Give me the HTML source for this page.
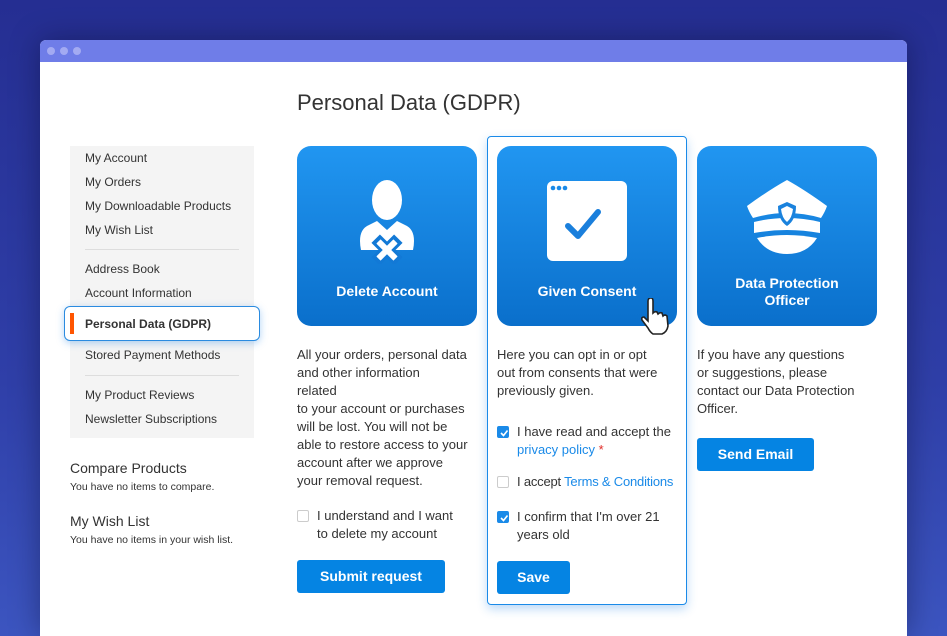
<!DOCTYPE html>
<html style="width:947px;height:636px;overflow:hidden"><head><meta charset="utf-8"><style>
*{margin:0;padding:0;box-sizing:border-box}
body{width:947px;height:636px;overflow:hidden;background:linear-gradient(180deg,#252e92 0%,#2f3fa8 60%,#3c55c0 100%);font-family:"Liberation Sans",sans-serif;color:#333;position:relative}
.win{position:absolute;left:40px;top:40px;width:867px;height:596px;background:#fff;border-radius:6px 6px 0 0;overflow:hidden;box-shadow:0 0 30px rgba(0,0,20,.35)}
.bar{height:22px;background:#6f7de8;position:relative}
.dot{position:absolute;top:7px;width:8px;height:8px;border-radius:50%;background:#a3aaf2}
.a{position:absolute;white-space:nowrap}
h1{position:absolute;left:257px;top:50px;font-size:22px;font-weight:normal;color:#333}
.side{position:absolute;left:30px;top:106px;width:184px;height:292px;background:#f4f4f4}
.si{position:absolute;left:45px;font-size:12px;color:#333}
.sep{position:absolute;left:45px;width:154px;height:1px;background:#ddd}
.hl{position:absolute;left:24px;top:266px;width:196px;height:35px;background:#fff;border:1px solid #2a8be0;border-radius:6px;box-shadow:0 2px 8px rgba(30,130,230,.35)}
.card{position:absolute;top:106px;width:180px;height:180px;border-radius:14px;background:linear-gradient(180deg,#2196f1,#0a6fcb)}
.card .l{position:absolute;left:0;right:0;text-align:center;color:#fff;font-weight:bold;font-size:14px;line-height:17px}
.p{position:absolute;font-size:13px;line-height:18px;color:#333}
.btn{position:absolute;background:#0584e3;color:#fff;font-weight:bold;font-size:14px;border-radius:3px;text-align:center}
.cb{position:absolute;width:12px;height:12px;border:1px solid #ccc;border-radius:2px;background:#fff}
.cb.on{background:#1a8ae8;border-color:#1a8ae8}
.lk{color:#1a8ae8}
</style></head><body>
<div class="win">
<div class="bar"><div class="dot" style="left:7px"></div><div class="dot" style="left:20px"></div><div class="dot" style="left:33px"></div></div>
<h1>Personal Data (GDPR)</h1>
<div class="side"></div>
<div class="si a" style="top:111px">My Account</div>
<div class="si a" style="top:135px">My Orders</div>
<div class="si a" style="top:159px">My Downloadable Products</div>
<div class="si a" style="top:183px">My Wish List</div>
<div class="sep" style="top:209px"></div>
<div class="si a" style="top:222px">Address Book</div>
<div class="si a" style="top:246px">Account Information</div>
<div class="hl"></div>
<div class="a" style="left:30px;top:273px;width:4px;height:21px;background:#ff5501"></div>
<div class="si a" style="top:277px;font-weight:bold">Personal Data (GDPR)</div>
<div class="si a" style="top:308px">Stored Payment Methods</div>
<div class="sep" style="top:335px"></div>
<div class="si a" style="top:348px">My Product Reviews</div>
<div class="si a" style="top:372px">Newsletter Subscriptions</div>
<div class="a" style="left:30px;top:420px;font-size:14px">Compare Products</div>
<div class="a" style="left:30px;top:441px;font-size:10.5px">You have no items to compare.</div>
<div class="a" style="left:30px;top:473px;font-size:14px">My Wish List</div>
<div class="a" style="left:30px;top:494px;font-size:10.5px">You have no items in your wish list.</div>

<div class="a" style="left:447px;top:96px;width:200px;height:469px;border:1px solid #1a8ae8;border-radius:4px;box-shadow:0 4px 10px rgba(30,130,230,.3)"></div>

<div class="card" style="left:257px">
<svg class="a" style="left:58px;top:34px" width="64" height="84" viewBox="0 0 64 84"><ellipse cx="32" cy="20" rx="15" ry="20" fill="#fff"/><path d="M6 70 Q2 50 14 45 L22 41 L32 50 L42 41 L50 45 Q62 50 58 70 Z" fill="#fff"/><g transform="translate(32,70) rotate(45)" stroke="#1279d6" stroke-width="4"><rect x="-4" y="-14" width="8" height="28" fill="#fff"/><rect x="-14" y="-4" width="28" height="8" fill="#fff"/></g><g transform="translate(32,70) rotate(45)"><rect x="-3" y="-12" width="6" height="24" fill="#fff"/><rect x="-12" y="-3" width="24" height="6" fill="#fff"/></g></svg>
<div class="l" style="top:137px">Delete Account</div></div>
<div class="card" style="left:457px">
<svg class="a" style="left:50px;top:35px" width="80" height="80" viewBox="0 0 80 80"><rect width="80" height="80" rx="6" fill="#fff"/><circle cx="6" cy="7" r="2.3" fill="#1a8ae8"/><circle cx="12" cy="7" r="2.3" fill="#1a8ae8"/><circle cx="18" cy="7" r="2.3" fill="#1a8ae8"/><path d="M21 45 L31 55 L51 31" fill="none" stroke="#1a7fdc" stroke-width="6" stroke-linecap="round" stroke-linejoin="round"/></svg>
<div class="l" style="top:137px">Given Consent</div>
<svg class="a" style="left:143px;top:152px" width="30" height="38" viewBox="0 0 30 38"><path d="M8 3 Q8 0 11 0 Q13 0 13 3 L13 15 Q15 13 17 14 L18 16 Q20 14 22 15 L23 18 Q25 16 27 18 L28 28 Q27 34 22 36 L13 36 Q10 34 8 30 L2 22 Q1 19 4 19 L8 23 Z" fill="#fff" stroke="#222" stroke-width="1.6"/></svg></div>
<div class="card" style="left:657px">
<svg class="a" style="left:48px;top:34px" width="84" height="76" viewBox="0 0 84 76"><path d="M42 0 Q24 10 2 26 Q4 32 8 38 Q42 28 76 38 Q80 32 82 26 Q60 10 42 0 Z" fill="#fff"/><path d="M9 42 Q42 34 75 42 L75 53 Q42 47 9 53 Z" fill="#fff"/><path d="M12 58 Q42 52 72 58 Q62 74 42 74 Q22 74 12 58 Z" fill="#fff"/><path d="M42 22 L51 26 Q51 40 42 46 Q33 40 33 26 Z" fill="#1a82dd"/><path d="M42 26 L48 29 Q47 38 42 42 Q37 38 36 29 Z" fill="#fff"/></svg>
<div class="l" style="top:129px">Data Protection<br>Officer</div></div>

<div class="p a" style="left:257px;top:306px">All your orders, personal data<br>and other information<br>related<br>to your account or purchases<br>will be lost. You will not be<br>able to restore access to your<br>account after we approve<br>your removal request.</div>
<div class="cb" style="left:257px;top:470px"></div>
<div class="p a" style="left:277px;top:467px">I understand and I want<br>to delete my account</div>
<div class="btn" style="left:257px;top:520px;width:148px;height:33px;line-height:33px">Submit request</div>

<div class="p a" style="left:457px;top:306px">Here you can opt in or opt<br>out from consents that were<br>previously given.</div>
<div class="cb on" style="left:457px;top:386px"><svg class="a" style="left:1px;top:1px" width="10" height="10"><path d="M2 5 L4.5 7.5 L8.5 2.5" fill="none" stroke="#fff" stroke-width="1.6"/></svg></div>
<div class="p a" style="left:477px;top:383px">I have read and accept the<br><span class="lk">privacy policy</span> <span style="color:#e02b27">*</span></div>
<div class="cb" style="left:457px;top:436px"></div>
<div class="p a" style="left:477px;top:433px;letter-spacing:-.2px">I accept <span class="lk">Terms &amp; Conditions</span></div>
<div class="cb on" style="left:457px;top:471px"><svg class="a" style="left:1px;top:1px" width="10" height="10"><path d="M2 5 L4.5 7.5 L8.5 2.5" fill="none" stroke="#fff" stroke-width="1.6"/></svg></div>
<div class="p a" style="left:477px;top:468px">I confirm that I'm over 21<br>years old</div>
<div class="btn" style="left:457px;top:521px;width:73px;height:33px;line-height:33px">Save</div>

<div class="p a" style="left:657px;top:306px">If you have any questions<br>or suggestions, please<br>contact our Data Protection<br>Officer.</div>
<div class="btn" style="left:657px;top:398px;width:117px;height:33px;line-height:33px">Send Email</div>
</div>
</body></html>
